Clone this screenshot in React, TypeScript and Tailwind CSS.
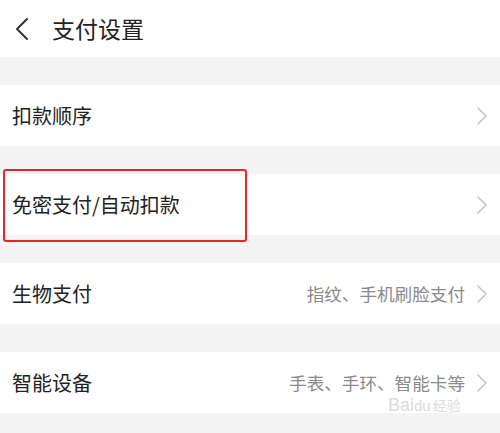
import React from "react";

const Chevron = () => (
  <svg width="12" height="20" viewBox="0 0 12 20" fill="none" className="shrink-0">
    <path d="M2 2 L10 10 L2 18" stroke="#c4c4c4" strokeWidth="1.6" strokeLinecap="round" strokeLinejoin="round" />
  </svg>
);

const Row = ({ label, sub }: { label: string; sub?: string }) => (
  <div className="flex h-[61px] items-center justify-between bg-white pl-[12px] pr-[12px]">
    <span className="text-[20px] leading-none text-[#222]">{label}</span>
    <div className="flex items-center gap-[11px]">
      {sub && <span className="text-[17.6px] leading-none text-[#8a8a8a]">{sub}</span>}
      <Chevron />
    </div>
  </div>
);

export default function App() {
  return (
    <div
      className="relative h-[433px] w-[500px] overflow-hidden bg-[#f4f4f4]"
      style={{ fontFamily: '"Noto Sans CJK SC", "Noto Sans", sans-serif' }}
    >
      <div className="flex h-[57px] items-center bg-white pl-[14px]">
        <svg width="16" height="24" viewBox="0 0 16 24" fill="none">
          <path d="M13 2 L3 12 L13 22" stroke="#333" strokeWidth="2" strokeLinecap="round" strokeLinejoin="round" />
        </svg>
        <span className="ml-[22px] text-[23px] text-[#222]">支付设置</span>
      </div>
      <div className="flex flex-col gap-[28px] pt-[28px]">
        <Row label="扣款顺序" />
        <Row label="免密支付/自动扣款" />
        <Row label="生物支付" sub="指纹、手机刷脸支付" />
        <Row label="智能设备" sub="手表、手环、智能卡等" />
      </div>
      <div className="absolute left-[3px] top-[169px] h-[73px] w-[244px] rounded-[3px] border-[2.5px] border-[#e5262b]" />
      <div
        className="pointer-events-none absolute left-[388px] top-[396px] flex items-baseline text-[18px] leading-none text-[#dcdcdc]"
        style={{ fontFamily: '"Liberation Sans", sans-serif' }}
      >
        <span>Bai</span>
        <span className="text-[15px]">du</span>
        <span className="ml-[2px] text-[14px]" style={{ fontFamily: '"Noto Sans CJK SC", sans-serif' }}>经验</span>
      </div>
    </div>
  );
}
